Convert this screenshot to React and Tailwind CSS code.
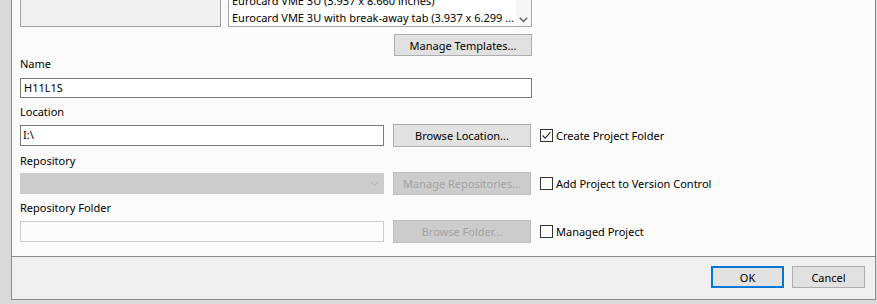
import React from "react";

function Btn({ children, disabled, primary, className = "" }) {
  const base = "flex items-center justify-center text-[11px] leading-none select-none";
  const style = disabled
    ? "bg-[#cccccc] border border-[#bfbfbf] text-[#a3a3a3]"
    : primary
    ? "bg-[#e1e1e1] border-2 border-[#0078d7] text-[#000]"
    : "bg-[#e1e1e1] border border-[#adadad] text-[#000]";
  return <div className={`${base} ${style} ${className}`}>{children}</div>;
}

function Check({ checked, label }) {
  return (
    <div className="flex items-center ml-[9px] gap-[3px]">
      <div className="w-[13px] h-[13px] border border-[#333333] bg-white flex items-center justify-center">
        {checked && (
          <svg width="11" height="11" viewBox="0 0 11 11">
            <path d="M1.5 5.5 L4.2 8.2 L9.5 2.2" fill="none" stroke="#333333" strokeWidth="1.2" />
          </svg>
        )}
      </div>
      <span className="text-[11px] text-[#000] leading-[16px]">{label}</span>
    </div>
  );
}

function Label({ children, className = "" }) {
  return <div className={`text-[11px] leading-[16px] text-[#000] h-[16px] ${className}`}>{children}</div>;
}

export default function App() {
  return (
    <div className="w-[877px] h-[304px] bg-[#dadada] pl-[11px] overflow-hidden font-['Noto_Sans',sans-serif]">
      <div className="w-[865px] h-[300px] flex flex-col border-x border-b border-[#8a8a8a]">
        <div className="h-[256px] bg-[#fbfbfb] pl-[8px] flex flex-col">
          {/* top row */}
          <div className="flex gap-[7px] h-[27px]">
            <div className="w-[201px] h-[27px] bg-[#f0f0f0] border-x border-b border-[#a0a0a0]" />
            <div className="w-[304px] h-[27px] bg-white border-x border-b border-[#a9a9a9] flex overflow-hidden">
              <div className="flex-1 flex flex-col justify-end pl-[3px] pb-[0px] text-[11px] text-[#000] whitespace-nowrap overflow-hidden">
                <div className="h-[17px] leading-[17px]">Eurocard VME 3U (3.937 x 8.660 inches)</div>
                <div className="h-[17px] leading-[17px]">Eurocard VME 3U with break-away tab (3.937 x 6.299 ...</div>
              </div>
              <div className="w-[15px] bg-[#f7f7f7] flex flex-col justify-end items-center pb-[3px]">
                <svg width="9" height="6" viewBox="0 0 9 6">
                  <path d="M0.8 0.8 L4.5 4.5 L8.2 0.8" fill="none" stroke="#606060" strokeWidth="1.4" />
                </svg>
              </div>
            </div>
          </div>
          {/* form column */}
          <div className="w-[512px] flex flex-col">
            <div className="flex justify-end mt-[7px]">
              <Btn className="w-[138px] h-[22px]">Manage Templates...</Btn>
            </div>
            <Label className="mt-0">Name</Label>
            <div className="mt-[6px] h-[20px] border border-[#7a7a7a] bg-white flex items-center pl-[3px] text-[11px] text-[#000]">
              H11L1S
            </div>
          </div>
          <Label className="mt-[6px]">Location</Label>
          <div className="mt-[4px] flex items-center h-[23px]">
            <div className="w-[364px] h-[21px] border border-[#7a7a7a] bg-white flex items-center pl-[2px] text-[11px] text-[#000]">
              I:\
            </div>
            <Btn className="ml-[9px] w-[138px] h-[23px]">Browse Location...</Btn>
            <Check checked label="Create Project Folder" />
          </div>
          <Label className="mt-[6px]">Repository</Label>
          <div className="mt-[3px] flex items-center h-[23px]">
            <div className="w-[364px] h-[21px] bg-[#cccccc] border border-[#cccccc] flex items-center justify-end pr-[4px]">
              <svg width="9" height="6" viewBox="0 0 9 6">
                <path d="M0.8 0.8 L4.5 4.5 L8.2 0.8" fill="none" stroke="#b8b8b8" strokeWidth="1.2" />
              </svg>
            </div>
            <Btn disabled className="ml-[9px] w-[138px] h-[23px]">Manage Repositories...</Btn>
            <Check label="Add Project to Version Control" />
          </div>
          <Label className="mt-[5px]">Repository Folder</Label>
          <div className="mt-[4px] flex items-center h-[23px]">
            <div className="w-[364px] h-[21px] border border-[#cccccc] bg-[#fbfbfb]" />
            <Btn disabled className="ml-[9px] w-[138px] h-[23px]">Browse Folder...</Btn>
            <Check label="Managed Project" />
          </div>
        </div>
        <div className="flex-1 bg-[#f0f0f0] border-t border-[#8a8a8a] flex justify-end items-start pt-[9px] pr-[10px] gap-[8px]">
          <Btn primary className="w-[73px] h-[22px]">OK</Btn>
          <Btn className="w-[73px] h-[22px]">Cancel</Btn>
        </div>
      </div>
    </div>
  );
}
